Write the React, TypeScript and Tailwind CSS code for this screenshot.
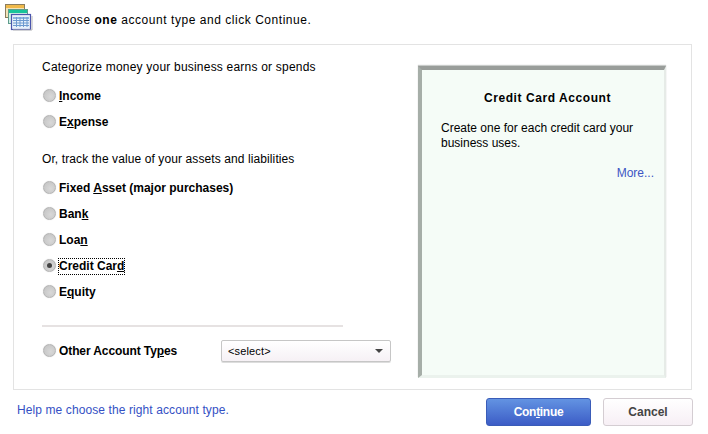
import React from 'react';

const font = 'font-["Liberation_Sans",Arial,sans-serif]';

const Radio = ({ checked = false }: { checked?: boolean }) => (
  <span className="w-[13px] h-[13px] mb-[2px] rounded-full shrink-0 border border-[#b4b4b4] bg-[radial-gradient(circle_at_60%_60%,#d8d8d8,#c8c8c8_70%,#b8b8b8)] shadow-[0_0_1px_#ccc] flex items-center justify-center">
    {checked && <span className="w-[5px] h-[5px] rounded-full bg-[#444]" />}
  </span>
);

// bold radio label, the mnemonic letter gets underlined
const Option = ({ pre, key_, post, checked, focus }: { pre: string; key_: string; post: string; checked?: boolean; focus?: boolean }) => (
  <div className="h-[26px] flex items-center gap-[3px] pl-px">
    <Radio checked={checked} />
    <span className={`text-[12px] font-bold leading-[15px] text-black tracking-normal ${focus ? 'outline-1 outline-dotted outline-black' : ''}`}>
      {pre}<span className="underline">{key_}</span>{post}
    </span>
  </div>
);

const LedgerIcon = () => (
  <svg width="32" height="32" viewBox="0 0 32 32" className="shrink-0">
    <rect x="3.5" y="4.5" width="19" height="13" fill="#f2e4b8" stroke="#8b7d5e" />
    <rect x="4" y="5" width="18" height="3" fill="#f0b94a" />
    <rect x="6.5" y="9.5" width="19" height="14" fill="#d4f2e6" stroke="#5f9c8c" />
    <rect x="7" y="10" width="18" height="3" fill="#18c49a" />
    <rect x="9.5" y="14.5" width="19" height="15" fill="#e8f1fb" stroke="#4a55ad" strokeWidth="1.2" />
    <rect x="11" y="17" width="16" height="2" fill="#8fb6e0" />
    <path d="M11 20.5h16M11 23h16M11 25.5h16M14.5 17v10M18 17v10M21.5 17v10M25 17v10" stroke="#6d9ad0" strokeWidth="1" fill="none" />
    <path d="M30 16v14H11" stroke="#b8b8b8" fill="none" />
  </svg>
);

export default function App() {
  return (
    <div className={`w-[708px] h-[434px] bg-white overflow-hidden flex flex-col ${font} text-[12px] text-black`}>
      {/* Header */}
      <div className="h-[44px] pl-[2px] flex items-start">
        <LedgerIcon />
        <p className="ml-[12px] mt-[13px] leading-[15px] tracking-[0.54px]">
          Choose <b>one</b> account type and click Continue.
        </p>
      </div>

      {/* Main panel */}
      <div className="ml-[13px] w-[679px] h-[346px] border border-[#e3e3e3] flex">
        <div className="w-[404px] pl-[28px] pt-[15px] flex flex-col">
          <p className="leading-[15px] mb-[8px] tracking-[0.21px]">Categorize money your business earns or spends</p>
          <Option pre="" key_="I" post="ncome" />
          <Option pre="E" key_="x" post="pense" />
          <p className="leading-[15px] mt-[17px] mb-[8px] tracking-[0.1px]">Or, track the value of your assets and liabilities</p>
          <Option pre="Fixed " key_="A" post="sset (major purchases)" />
          <Option pre="Ban" key_="k" post="" />
          <Option pre="Loa" key_="n" post="" />
          <Option pre="Credit Car" key_="d" post="" checked focus />
          <Option pre="E" key_="q" post="uity" />
          <div className="w-[301px] h-[2px] bg-[#e6e2e2] mt-[20px] mb-[12px]" />
          <div className="flex items-center h-[24px]">
            <div className="w-[179px] flex items-center gap-[3px] pl-px">
              <Radio />
              <span className="font-bold leading-[15px] tracking-[-0.1px]">
                Other Account Ty<span className="underline">p</span>es
              </span>
            </div>
            <div className="w-[170px] h-[22px] rounded-[2px] border border-[#c6c6c6] bg-gradient-to-b from-white to-[#f6f1f5] flex items-center justify-between pl-[6px] pr-[7px] shadow-[0_1px_0_#ddd]">
              <span className="text-[11px] leading-none tracking-[0.15px]">&lt;select&gt;</span>
              <span className="w-0 h-0 border-l-[4px] border-r-[4px] border-t-[4px] border-l-transparent border-r-transparent border-t-[#444]" />
            </div>
          </div>
        </div>

        {/* Description panel */}
        <div className="mt-[21px] w-[248px] h-[312px] bg-[#f5fcf7] border-t-[4px] border-l-[4px] border-t-[#999d9a] border-l-[#a6aea8] border-r-[2px] border-r-[#e6ebe7] border-b-[3px] border-b-[#ebf2ed] shadow-[0_-1px_1px_#c8cbc9] pt-[21px] pl-[19px] pr-[10px]">
          <p className="font-bold text-center tracking-[0.57px] leading-[15px] mb-[15px]">Credit Card Account</p>
          <p className="leading-[15px] pr-[4px]">Create one for each credit card your business uses.</p>
          <p className="text-right text-[#3c55c4] leading-[15px] mt-[15px]">More...</p>
        </div>
      </div>

      {/* Footer */}
      <div className="flex items-start pl-[17px] pt-[8px]">
        <span className="text-[#3450c4] leading-[15px] mt-[5px] tracking-[0.1px]">Help me choose the right account type.</span>
        <div className="ml-auto mr-[15px] flex gap-[12px]">
          <button className="w-[105px] h-[28px] rounded-[3px] border border-[#3a5cb8] bg-gradient-to-b from-[#6393e2] to-[#3d5cc6] text-white font-bold tracking-[-0.3px]">
            Con<span className="underline">t</span>inue
          </button>
          <button className="w-[90px] h-[28px] rounded-[3px] border border-[#d4cdd2] bg-gradient-to-b from-white to-[#f7eff5] text-[#444] font-bold">
            Cancel
          </button>
        </div>
      </div>
    </div>
  );
}
